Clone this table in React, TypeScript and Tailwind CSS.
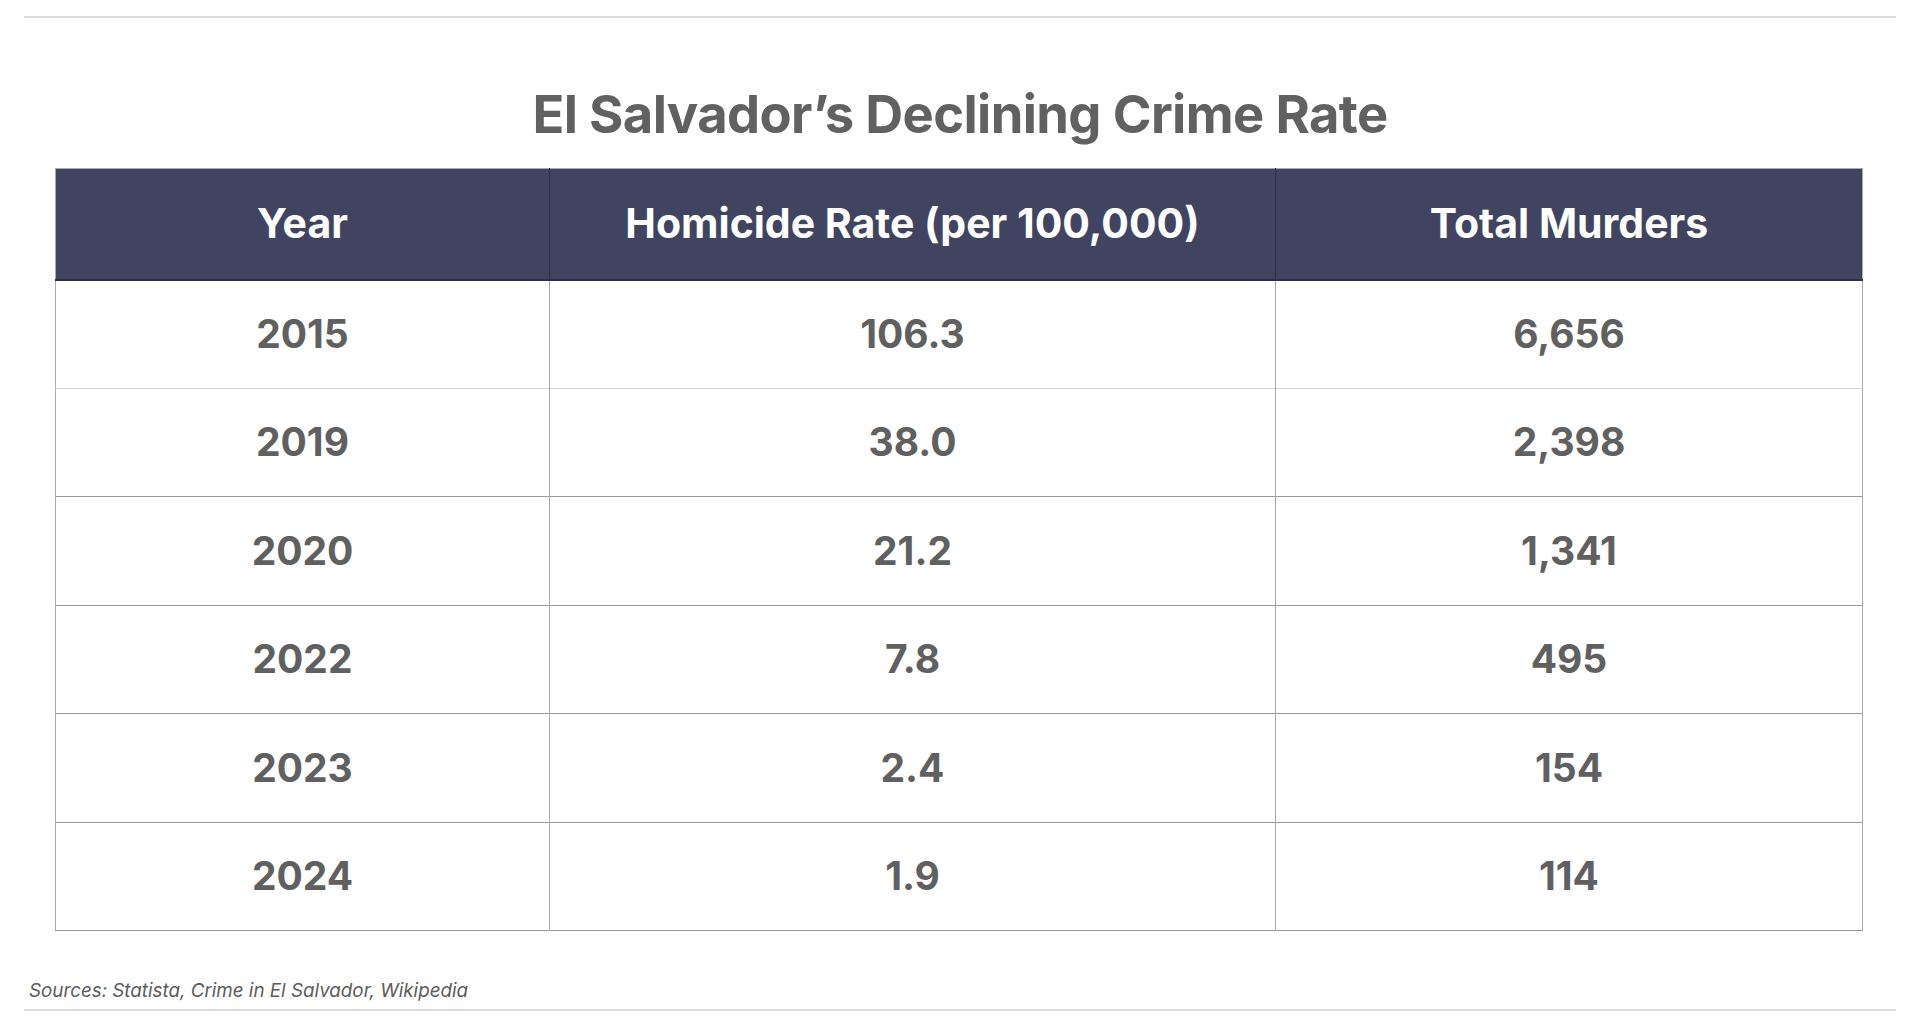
const rows = [
  { year: "2015", rate: "106.3", total: "6,656" },
  { year: "2019", rate: "38.0", total: "2,398" },
  { year: "2020", rate: "21.2", total: "1,341" },
  { year: "2022", rate: "7.8", total: "495" },
  { year: "2023", rate: "2.4", total: "154" },
  { year: "2024", rate: "1.9", total: "114" },
]

export default function App() {
  return (
    <div className="w-[1920px] h-[1029px] bg-white px-[24px] pt-[16px] font-['Inter',sans-serif]">
      <div className="h-[2px] bg-[#dddddd]" />

      <h1 className="h-[150px] flex items-center justify-center pt-[43px] pb-[1px] text-[52.5px] font-bold text-[#616161] tracking-[-0.012em] leading-none">
        El Salvador’s Declining Crime Rate
      </h1>

      <table className="ml-[31px] w-[1807px] border-collapse border border-[#aaaaaa] table-fixed">
        <colgroup>
          <col className="w-[494px]" />
          <col className="w-[726px]" />
          <col className="w-[587px]" />
        </colgroup>
        <thead>
          <tr className="h-[111px] bg-[#404461] text-white text-[41px] font-bold">
            <th className="border-r border-[#2c2f45] border-b-2 border-b-[#2c2f45]">Year</th>
            <th className="border-r border-[#2c2f45] border-b-2 border-b-[#2c2f45]">Homicide Rate (per 100,000)</th>
            <th className="border-b-2 border-b-[#2c2f45]">Total Murders</th>
          </tr>
        </thead>
        <tbody>
          {rows.map((r, i) => (
            <tr
              key={r.year}
              className={`h-[108.5px] text-[39px] font-bold text-[#606060] text-center ${
                i === 0 ? "border-b border-[#d4d4d4]" : "border-b border-[#9a9a9a]"
              }`}
            >
              <td className="border-r border-[#aaaaaa]">{r.year}</td>
              <td className="border-r border-[#aaaaaa]">{r.rate}</td>
              <td>{r.total}</td>
            </tr>
          ))}
        </tbody>
      </table>

      <p className="mt-[48px] ml-[5px] text-[18.8px] italic text-[#5c5c5c] leading-[24px]">
        Sources: Statista, Crime in El Salvador, Wikipedia
      </p>
      <div className="mt-[6px] h-[2px] bg-[#dddddd]" />
    </div>
  )
}
